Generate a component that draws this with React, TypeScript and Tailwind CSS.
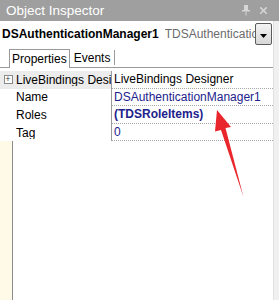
import { X } from 'lucide-react';

const rows = [
  { name: 'LiveBindings Designer', value: 'LiveBindings Designer', tone: 'text-black', expand: true },
  { name: 'Name', value: 'DSAuthenticationManager1', tone: 'text-[#22228c]' },
  { name: 'Roles', value: '(TDSRoleItems)', tone: 'text-[#22228c] font-bold' },
  { name: 'Tag', value: '0', tone: 'text-[#22228c]' },
];

function PinIcon() {
  return (
    <svg width="10" height="11" viewBox="0 0 10 11" className="text-[#d6d6d6]">
      <rect x="3" y="0" width="4" height="5" fill="currentColor" />
      <rect x="1" y="5" width="8" height="1.5" fill="currentColor" />
      <rect x="4.5" y="6.5" width="1" height="4" fill="currentColor" />
    </svg>
  );
}

export default function App() {
  return (
    <div
      className="relative w-[279px] h-[300px] overflow-hidden bg-white flex flex-col text-[12px] leading-none"
      style={{ fontFamily: '"Liberation Sans", Arial, sans-serif' }}
    >
      {/* Title bar */}
      <div className="h-[21px] shrink-0 bg-[#9f9f9f] flex items-center pl-[6px] pr-[10px]">
        <span className="text-[13.5px] text-white">Object Inspector</span>
        <div className="ml-auto flex items-center gap-[7px]">
          <PinIcon />
          <X className="w-[11px] h-[11px] text-[#d6d6d6]" strokeWidth={3.5} />
        </div>
      </div>

      <div className="flex-1 flex min-h-0">
        <div className="flex-1 flex flex-col min-w-0">
          {/* Component selector */}
          <div className="h-[25px] shrink-0 flex items-center pl-[2px] pr-[1px]">
            <span className="font-bold text-black whitespace-nowrap">DSAuthenticationManager1</span>
            <span className="ml-[6px] text-[#6b6b6b] whitespace-nowrap overflow-hidden flex-1">
              TDSAuthentication
            </span>
            <div className="w-[17px] h-[22px] border border-[#5c5c5c] rounded-[2px] bg-gradient-to-b from-[#f4f4f4] to-[#d6d6d6] flex items-end justify-center pb-[6px]">
              <svg width="7" height="4" viewBox="0 0 7 4">
                <path d="M0 0h7L3.5 4z" fill="#000" />
              </svg>
            </div>
          </div>

          {/* Tabs */}
          <div className="h-[22px] shrink-0 flex items-end border-b border-[#9a9a9a] pl-[9px]">
            <div className="h-[19px] px-[2px] border border-b-0 border-[#9a9a9a] bg-white flex items-center -mb-px text-black">
              Properties
            </div>
            <div className="h-[15px] mb-[2px] px-[4px] border-r border-[#9a9a9a] flex items-center text-black">
              Events
            </div>
          </div>

          {/* Property grid */}
          <div className="pt-[3px] shrink-0">
            {rows.map((r, i) => (
              <div key={r.name} className="h-[17.6px] flex">
                <div
                  className={`w-[112px] shrink-0 flex items-center border-r border-[#9a9a9a] ${
                    i === 0 ? 'bg-[#ececec]' : ''
                  }`}
                >
                  <div className="w-[16px] shrink-0 flex justify-center">
                    {r.expand && (
                      <div className="w-[9px] h-[9px] border border-[#8a8a8a] bg-white flex items-center justify-center text-[9px] leading-none text-[#444]">
                        +
                      </div>
                    )}
                  </div>
                  <span className="whitespace-nowrap overflow-hidden text-black">{r.name}</span>
                </div>
                <div
                  className={`flex-1 flex items-center pl-[2px] whitespace-nowrap overflow-hidden border-b border-dotted border-[#a8a8a8] ${r.tone}`}
                >
                  {r.value}
                </div>
              </div>
            ))}
          </div>

          {/* Empty grid area */}
          <div className="flex-1 flex">
            <div className="w-[13px] bg-[#fffae8] border-r border-[#8c8c8c]" />
            <div className="flex-1 bg-white" />
          </div>
        </div>

        {/* Right edge strip */}
        <div className="w-[6px] shrink-0 bg-[#f0f0f0] border-l border-[#e2e2e2]" />
      </div>

      {/* Red annotation arrow */}
      <svg className="absolute left-0 top-0 pointer-events-none" width="279" height="300" viewBox="0 0 279 300">
        <polygon
          points="217,110 231,127 225.5,128 243.5,197 221,130 215,131.5"
          fill="#e8262b"
        />
      </svg>
    </div>
  );
}
